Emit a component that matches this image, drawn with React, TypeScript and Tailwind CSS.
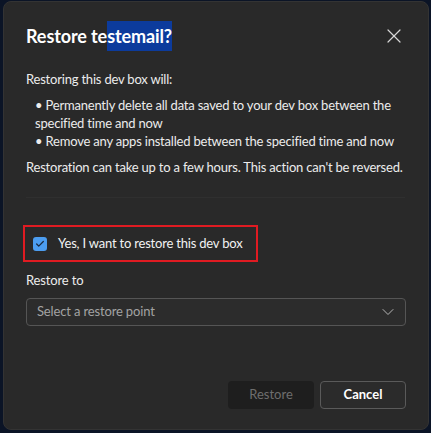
import { X, ChevronDown, Check } from 'lucide-react';

export default function App() {
  return (
    <div
      className="w-[431px] h-[433px] bg-[#0b1426] pt-px pl-[3px] pr-[2px] pb-[3px]"
      style={{ fontFamily: 'Lato, "Noto Sans", sans-serif' }}
    >
      <div className="h-full rounded-lg bg-[#292929] border border-[#333] text-white flex flex-col px-[22px]">
        {/* Header */}
        <div className="flex items-center justify-between mt-[19px] h-[30px]">
          <h1 className="text-[18px] font-bold leading-[30px] tracking-[-0.1px]">
            Restore te<span className="bg-[#0c3b9c] py-[4px]">stemail?</span>
          </h1>
          <X className="w-[24px] h-[24px] text-[#d6d6d6]" strokeWidth={1.2} />
        </div>

        {/* Body */}
        <div className="mt-[19px] text-[13px] leading-[18px] tracking-[-0.2px] text-[#ececec]">
          <p>Restoring this dev box will:</p>
          <ul className="mt-[8px] pl-[9px] pr-[4px]">
            <li>• Permanently delete all data saved to your dev box between the specified time and now</li>
            <li>• Remove any apps installed between the specified time and now</li>
          </ul>
          <p className="mt-[8px] whitespace-nowrap">Restoration can take up to a few hours. This action can't be reversed.</p>
        </div>

        <div className="mt-[21px] h-px bg-[#2f2f2f] mr-[1px]" />

        {/* Confirm checkbox */}
        <div className="mt-[27px] -ml-[3px] w-[235px] h-[37px] border-[2px] border-[#e01b22] flex items-center pl-[8px] gap-[11px]">
          <div className="w-[14px] h-[14px] rounded-[3px] bg-[#4c9df0] flex items-center justify-center">
            <Check className="w-[10px] h-[10px] text-[#1a2a40]" strokeWidth={3} />
          </div>
          <span className="text-[13px] tracking-[-0.2px] whitespace-nowrap text-[#f2f2f2]">Yes, I want to restore this dev box</span>
        </div>

        {/* Restore to */}
        <label className="mt-[9px] text-[13px] tracking-[-0.15px] text-[#ececec] leading-[18px]">Restore to</label>
        <div className="mt-[9px] h-[28px] rounded-[4px] border border-[#555] bg-[#2c2c2c] flex items-center justify-between pl-[10px] pr-[7px]">
          <span className="text-[13px] tracking-[-0.15px] text-[#a3a3a3]">Select a restore point</span>
          <ChevronDown className="w-[20px] h-[20px] text-[#b5b5b5]" strokeWidth={1.2} />
        </div>

        {/* Footer */}
        <div className="mt-auto mb-[20px] flex justify-end gap-[6px]">
          <button className="w-[86px] h-[28px] rounded-[4px] bg-[#1e1e1e] text-[13px] text-[#6e6e6e]">Restore</button>
          <button className="w-[86px] h-[28px] rounded-[4px] border border-[#5a5a5a] bg-[#2b2b2b] text-[13px] font-bold text-white">Cancel</button>
        </div>
      </div>
    </div>
  );
}
